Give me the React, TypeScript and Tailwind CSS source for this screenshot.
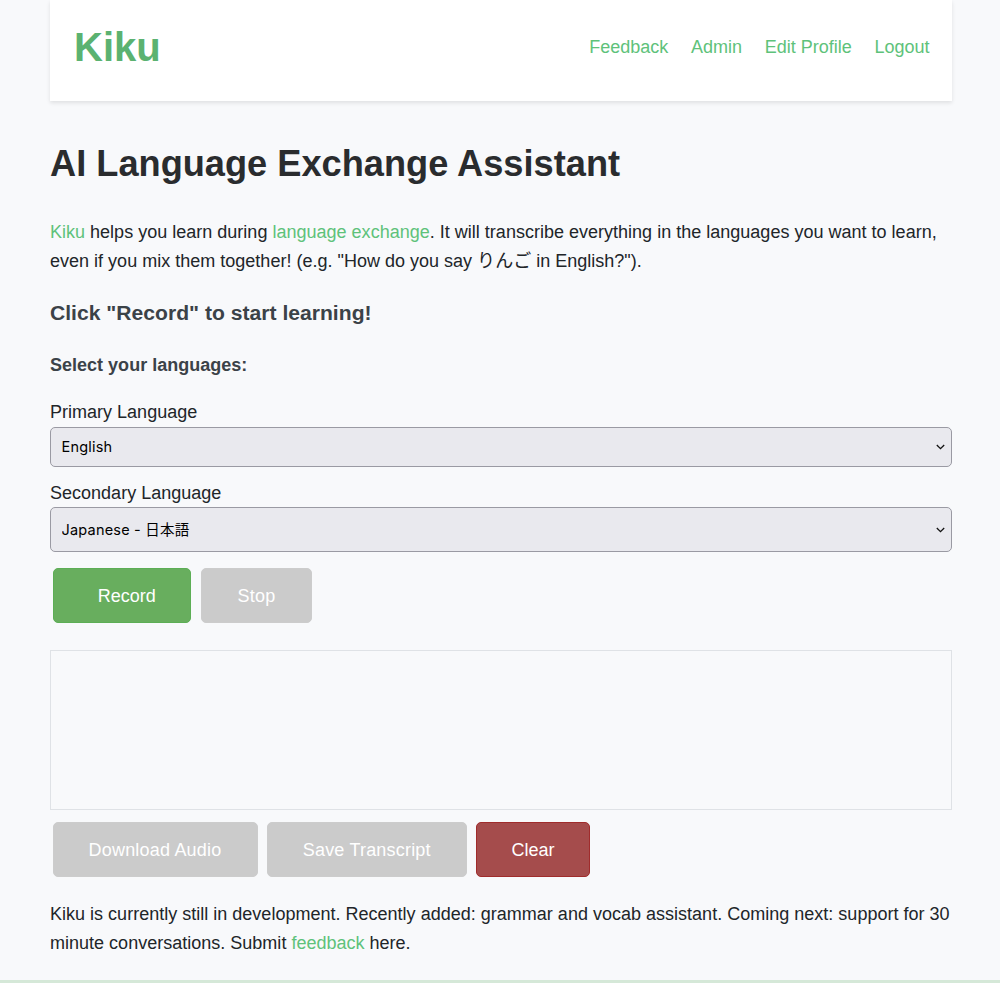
import React from "react";

const sans = "font-['Liberation_Sans',Arial,'Noto_Sans_CJK_JP',sans-serif]";

function Select({ value, h }: { value: string; h: string }) {
  return (
    <div className="relative">
      <select
        defaultValue={value}
        className={`block w-full appearance-none rounded-[5px] border border-[#9a9aa3] bg-[#e9e9ee] pb-[1px] pl-[10.5px] pr-8 text-[14.5px] tracking-[0.2px] text-black outline-none font-['Inter','Noto_Sans_CJK_JP',sans-serif] ${h}`}
      >
        <option>{value}</option>
      </select>
      <svg
        className="pointer-events-none absolute right-[7.5px] top-1/2 -translate-y-1/2"
        width="9"
        height="6"
        viewBox="0 0 9 6"
        fill="none"
        stroke="#111"
        strokeWidth="1.3"
      >
        <path d="M0.8 1 L4.5 4.7 L8.2 1" />
      </svg>
    </div>
  );
}

function Btn({ label, cls }: { label: string; cls: string }) {
  return (
    <button className={`h-[55px] rounded-[5px] border pt-[1px] text-center text-[18px] text-white ${cls}`}>
      {label}
    </button>
  );
}

const link = "text-[#5ec27a]";
const off = "border-[#cccccc] bg-[#cbcbcb] tracking-[0.2px]";

export default function App() {
  return (
    <div className={`h-[983px] overflow-hidden bg-[#f8f9fb] text-[18px] leading-[29px] tracking-[0.01px] text-[#212529] ${sans}`}>
      <div className="ml-[50px] flex h-[983px] w-[902px] flex-col">
        <header className="flex h-[101px] shrink-0 items-center justify-between bg-white pl-[24px] pr-[22.5px] shadow-[0_2px_4px_rgba(0,0,0,0.1)]">
          <div className="mt-[-8px] text-[40px] font-bold leading-none text-[#5bb271]">Kiku</div>
          <nav className="mt-[-6px] flex gap-[22.7px] text-[18px] tracking-normal text-[#5ec27a]">
            <a>Feedback</a>
            <a>Admin</a>
            <a>Edit Profile</a>
            <a>Logout</a>
          </nav>
        </header>

        <h1 className="mt-[40px] text-[36.2px] font-bold leading-[46px] text-[#2a2c2e]">
          AI Language Exchange Assistant
        </h1>

        <p className="mt-[31px]">
          <a className={link}>Kiku</a> helps you learn during{" "}
          <a className={link}>language exchange</a>. It will transcribe everything in the languages you want to learn,
          even if you mix them together! (e.g. "How do you say りんご in English?").
        </p>

        <h3 className="mt-[22px] text-[21.1px] font-bold leading-[30px] text-[#3b4248]">
          Click "Record" to start learning!
        </h3>

        <h4 className="mt-[23px] text-[18px] font-bold leading-[29px] text-[#3b4248]">
          Select your languages:
        </h4>

        <label className="mt-[18px] block leading-[29px]">Primary Language</label>
        <div>
          <Select value="English" h="h-[40px]" />
        </div>

        <label className="mt-[12px] block leading-[29px]">Secondary Language</label>
        <div className="mt-[-1px]">
          <Select value="Japanese - 日本語" h="h-[45px]" />
        </div>

        <div className="mt-[16px] flex gap-[10px] pl-[2.5px]">
          <Btn label="Record" cls="w-[138.5px] border-[#5cae55] bg-[#68ae5e] pl-[10px]" />
          <Btn label="Stop" cls={`w-[111px] ${off}`} />
        </div>

        <div className="mt-[27px] h-[160px] w-full shrink-0 border border-[#dfe2e6] bg-[#f8f9fb]" />

        <div className="mt-[12px] flex gap-[9.5px] pl-[2.5px]">
          <Btn label="Download Audio" cls={`w-[205px] ${off}`} />
          <Btn label="Save Transcript" cls={`w-[199.5px] ${off}`} />
          <Btn label="Clear" cls="w-[114px] border-[#a02c2c] bg-[#a54c4c]" />
        </div>

        <p className="mt-[23px]">
          Kiku is currently still in development. Recently added: grammar and vocab assistant. Coming next: support for 30
          minute conversations. Submit <a className={link}>feedback</a> here.
        </p>
      </div>
      <div className="fixed bottom-0 left-0 right-0 h-[3px] bg-[#d5e8d8]" />
    </div>
  );
}
